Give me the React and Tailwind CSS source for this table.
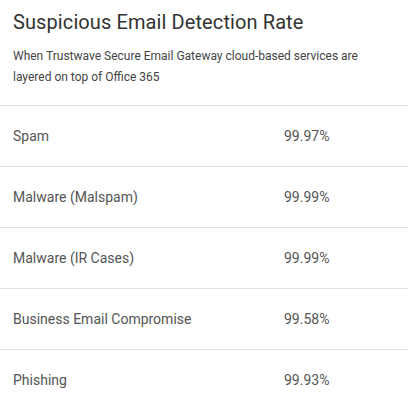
const rows = [
  { label: 'Spam', value: '99.97%' },
  { label: 'Malware (Malspam)', value: '99.99%' },
  { label: 'Malware (IR Cases)', value: '99.99%' },
  { label: 'Business Email Compromise', value: '99.58%' },
  { label: 'Phishing', value: '99.93%' },
]

export default function App() {
  return (
    <div className="w-[408px] h-[400px] bg-white overflow-hidden font-['Roboto',sans-serif]">
      {/* Header */}
      <div className="px-[13px] pt-[8px] pb-[17px] border-b border-[#e2e2e2]">
        <h1 className="text-[20px] leading-[28px] font-normal tracking-[0.1px] text-[#333]">
          Suspicious Email Detection Rate
        </h1>
        <p className="mt-[10px] max-w-[350px] text-[12px] leading-[21px] text-[#444]">
          When Trustwave Secure Email Gateway cloud-based services are layered on top of Office 365
        </p>
      </div>

      {/* Rows */}
      {rows.map((r) => (
        <div key={r.label} className="flex items-center h-[61px] border-b border-[#e2e2e2] px-[13px] pt-[1px] text-[14px] text-[#555]">
          <span className="w-[271px]">{r.label}</span>
          <span>{r.value}</span>
        </div>
      ))}
    </div>
  )
}
